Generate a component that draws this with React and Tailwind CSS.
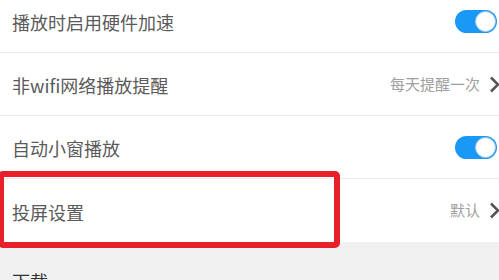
import { useState } from "react";

const Toggle = ({ on }) => (
  <div
    className={`relative w-[42px] h-[23px] rounded-full ${
      on ? "bg-[#1a98f5]" : "bg-gray-300"
    }`}
  >
    <div
      className={`absolute top-[1px] w-[21px] h-[21px] rounded-full bg-white border border-[#9cc7e6] ${
        on ? "right-[1px]" : "left-[1px]"
      }`}
    />
  </div>
);

const Chevron = () => (
  <svg width="12" height="17" viewBox="0 0 12 17" className="ml-[9px] -mr-[4px] shrink-0">
    <path d="M2 1.5 L9 8.5 L2 15.5" fill="none" stroke="#555" strokeWidth="2.6" />
  </svg>
);

const Row = ({ label, right, last }) => (
  <div
    className={`flex items-center justify-between pl-[12px] pr-[2px] pt-[3px] h-[63px] bg-white ${
      last ? "" : "border-b border-[#ececec]"
    }`}
  >
    <span className="text-[18px] text-[#5a5a5a]">{label}</span>
    <div className="-mt-[3px]">{right}</div>
  </div>
);

export default function App() {
  const [hw] = useState(true);
  const [mini] = useState(true);

  return (
    <div
      className="relative w-[499px] h-[280px] overflow-hidden bg-white"
      style={{ fontFamily: '"Noto Sans CJK SC", "Noto Sans", sans-serif' }}
    >
      <div className="-mt-[10px]">
        <Row label="播放时启用硬件加速" right={<Toggle on={hw} />} />
      </div>
      <Row
        label="非wifi网络播放提醒"
        right={
          <div className="flex items-center text-[15px] text-[#a0a0a0]">
            每天提醒一次
            <Chevron />
          </div>
        }
      />
      <Row label="自动小窗播放" right={<Toggle on={mini} />} />
      <Row
        label="投屏设置"
        last
        right={
          <div className="flex items-center text-[15px] text-[#a0a0a0]">
            默认
            <Chevron />
          </div>
        }
      />
      <div className="bg-[#f0f0f0] h-[40px] pl-[12px] pt-[26px]">
        <span className="text-[18px] text-[#333]">下载</span>
      </div>

      <div className="absolute left-[-2px] top-[171px] w-[342px] h-[77px] border-[6px] border-[#e8202a] rounded-[5px]" />
    </div>
  );
}
